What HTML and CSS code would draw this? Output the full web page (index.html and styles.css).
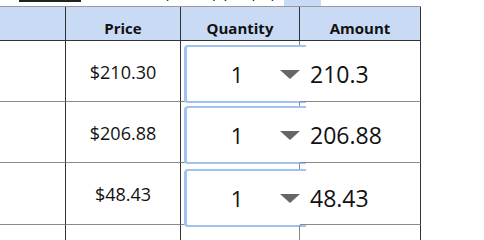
FILE: index.html
```html
<!DOCTYPE html>
<html>
<head>
<meta charset="utf-8">
<link rel="stylesheet" href="styles.css">
</head>
<body>
<div class="top">
  <span class="bar"></span>
  <span class="frag">Select the quantity you pay</span>
  <span class="hl"></span>
</div>
<div class="sheet">
  <div class="cell head c1"></div>
  <div class="cell head c2">Price</div>
  <div class="cell head c3">Quantity</div>
  <div class="cell head c4">Amount</div>

  <div class="cell row c1"></div>
  <div class="cell row c2 price">$210.30</div>
  <div class="cell row c3 qty"><div class="box"><span class="num">1</span><span class="tri"></span></div></div>
  <div class="cell row c4 amt">210.3</div>

  <div class="cell row c1"></div>
  <div class="cell row c2 price">$206.88</div>
  <div class="cell row c3 qty"><div class="box"><span class="num">1</span><span class="tri"></span></div></div>
  <div class="cell row c4 amt">206.88</div>

  <div class="cell row r3 c1"></div>
  <div class="cell row r3 c2 price">$48.43</div>
  <div class="cell row r3 c3 qty"><div class="box"><span class="num">1</span><span class="tri"></span></div></div>
  <div class="cell row r3 c4 amt">48.43</div>

  <div class="cell row last c1"></div>
  <div class="cell row last c2"></div>
  <div class="cell row last c3"></div>
  <div class="cell row last c4"></div>
</div>
</body>
</html>
```
FILE: styles.css
```css
html, body {
  margin: 0;
  padding: 0;
  background: #fff;
  overflow: hidden;
}
body {
  font-family: "Open Sans", "Noto Sans", sans-serif;
  color: #111;
  width: 484px;
  height: 240px;
}
.top {
  height: 6px;
  overflow: hidden;
  display: flex;
  align-items: flex-start;
}
.bar {
  display: block;
  width: 62px;
  height: 2px;
  background: #222;
  margin-left: 19px;
  flex: none;
}
.frag {
  font-size: 15px;
  line-height: 15px;
  margin-top: -14px;
  margin-left: 7px;
  white-space: nowrap;
  flex: none;
  width: 190px;
  overflow: hidden;
}
.hl {
  display: block;
  width: 37px;
  height: 6px;
  background: #c9daf5;
  margin-left: 6px;
  flex: none;
}
.sheet {
  display: grid;
  grid-template-columns: 66px 115px 119px 121px;
  grid-template-rows: 34px 61px 61px 62px 16px;
  border-top: 1px solid #999;
  width: 421px;
}
.cell {
  box-sizing: border-box;
  border-right: 1px solid #333;
  border-bottom: 1px solid #8a8a8a;
  display: flex;
  justify-content: center;
  align-items: center;
}
.head {
  background: #c9daf5;
  border-bottom-color: #333;
  font-weight: 700;
  font-size: 15px;
  line-height: 15px;
  align-items: flex-end;
  padding-bottom: 4px;
}
.row.c3 {
  border-right-color: #888;
}
.price {
  font-size: 18px;
  padding-top: 1px;
}
.qty {
  justify-content: flex-start;
  align-items: flex-start;
  padding: 4px 0 0 3px;
}
.r3.qty {
  padding-top: 6px;
}
.box {
  box-sizing: border-box;
  flex: none;
  width: 122px;
  height: 58px;
  border: 2px solid #a2c3ee;
  border-left-width: 3px;
  border-right: none;
  border-radius: 4px 0 0 4px;
  background: #fff;
  display: flex;
  align-items: center;
}
.num {
  width: 20px;
  text-align: center;
  margin-left: 40px;
  font-size: 22px;
}
.tri {
  width: 0;
  height: 0;
  margin-left: 33px;
  border-left: 10px solid transparent;
  border-right: 10px solid transparent;
  border-top: 9px solid #666;
}
.amt {
  justify-content: flex-start;
  align-items: center;
  padding: 5px 0 0 10px;
  font-size: 23px;
  color: #111;
}
.r3.amt {
  padding-top: 8px;
}
.last {
  border-bottom: none;
}
```
